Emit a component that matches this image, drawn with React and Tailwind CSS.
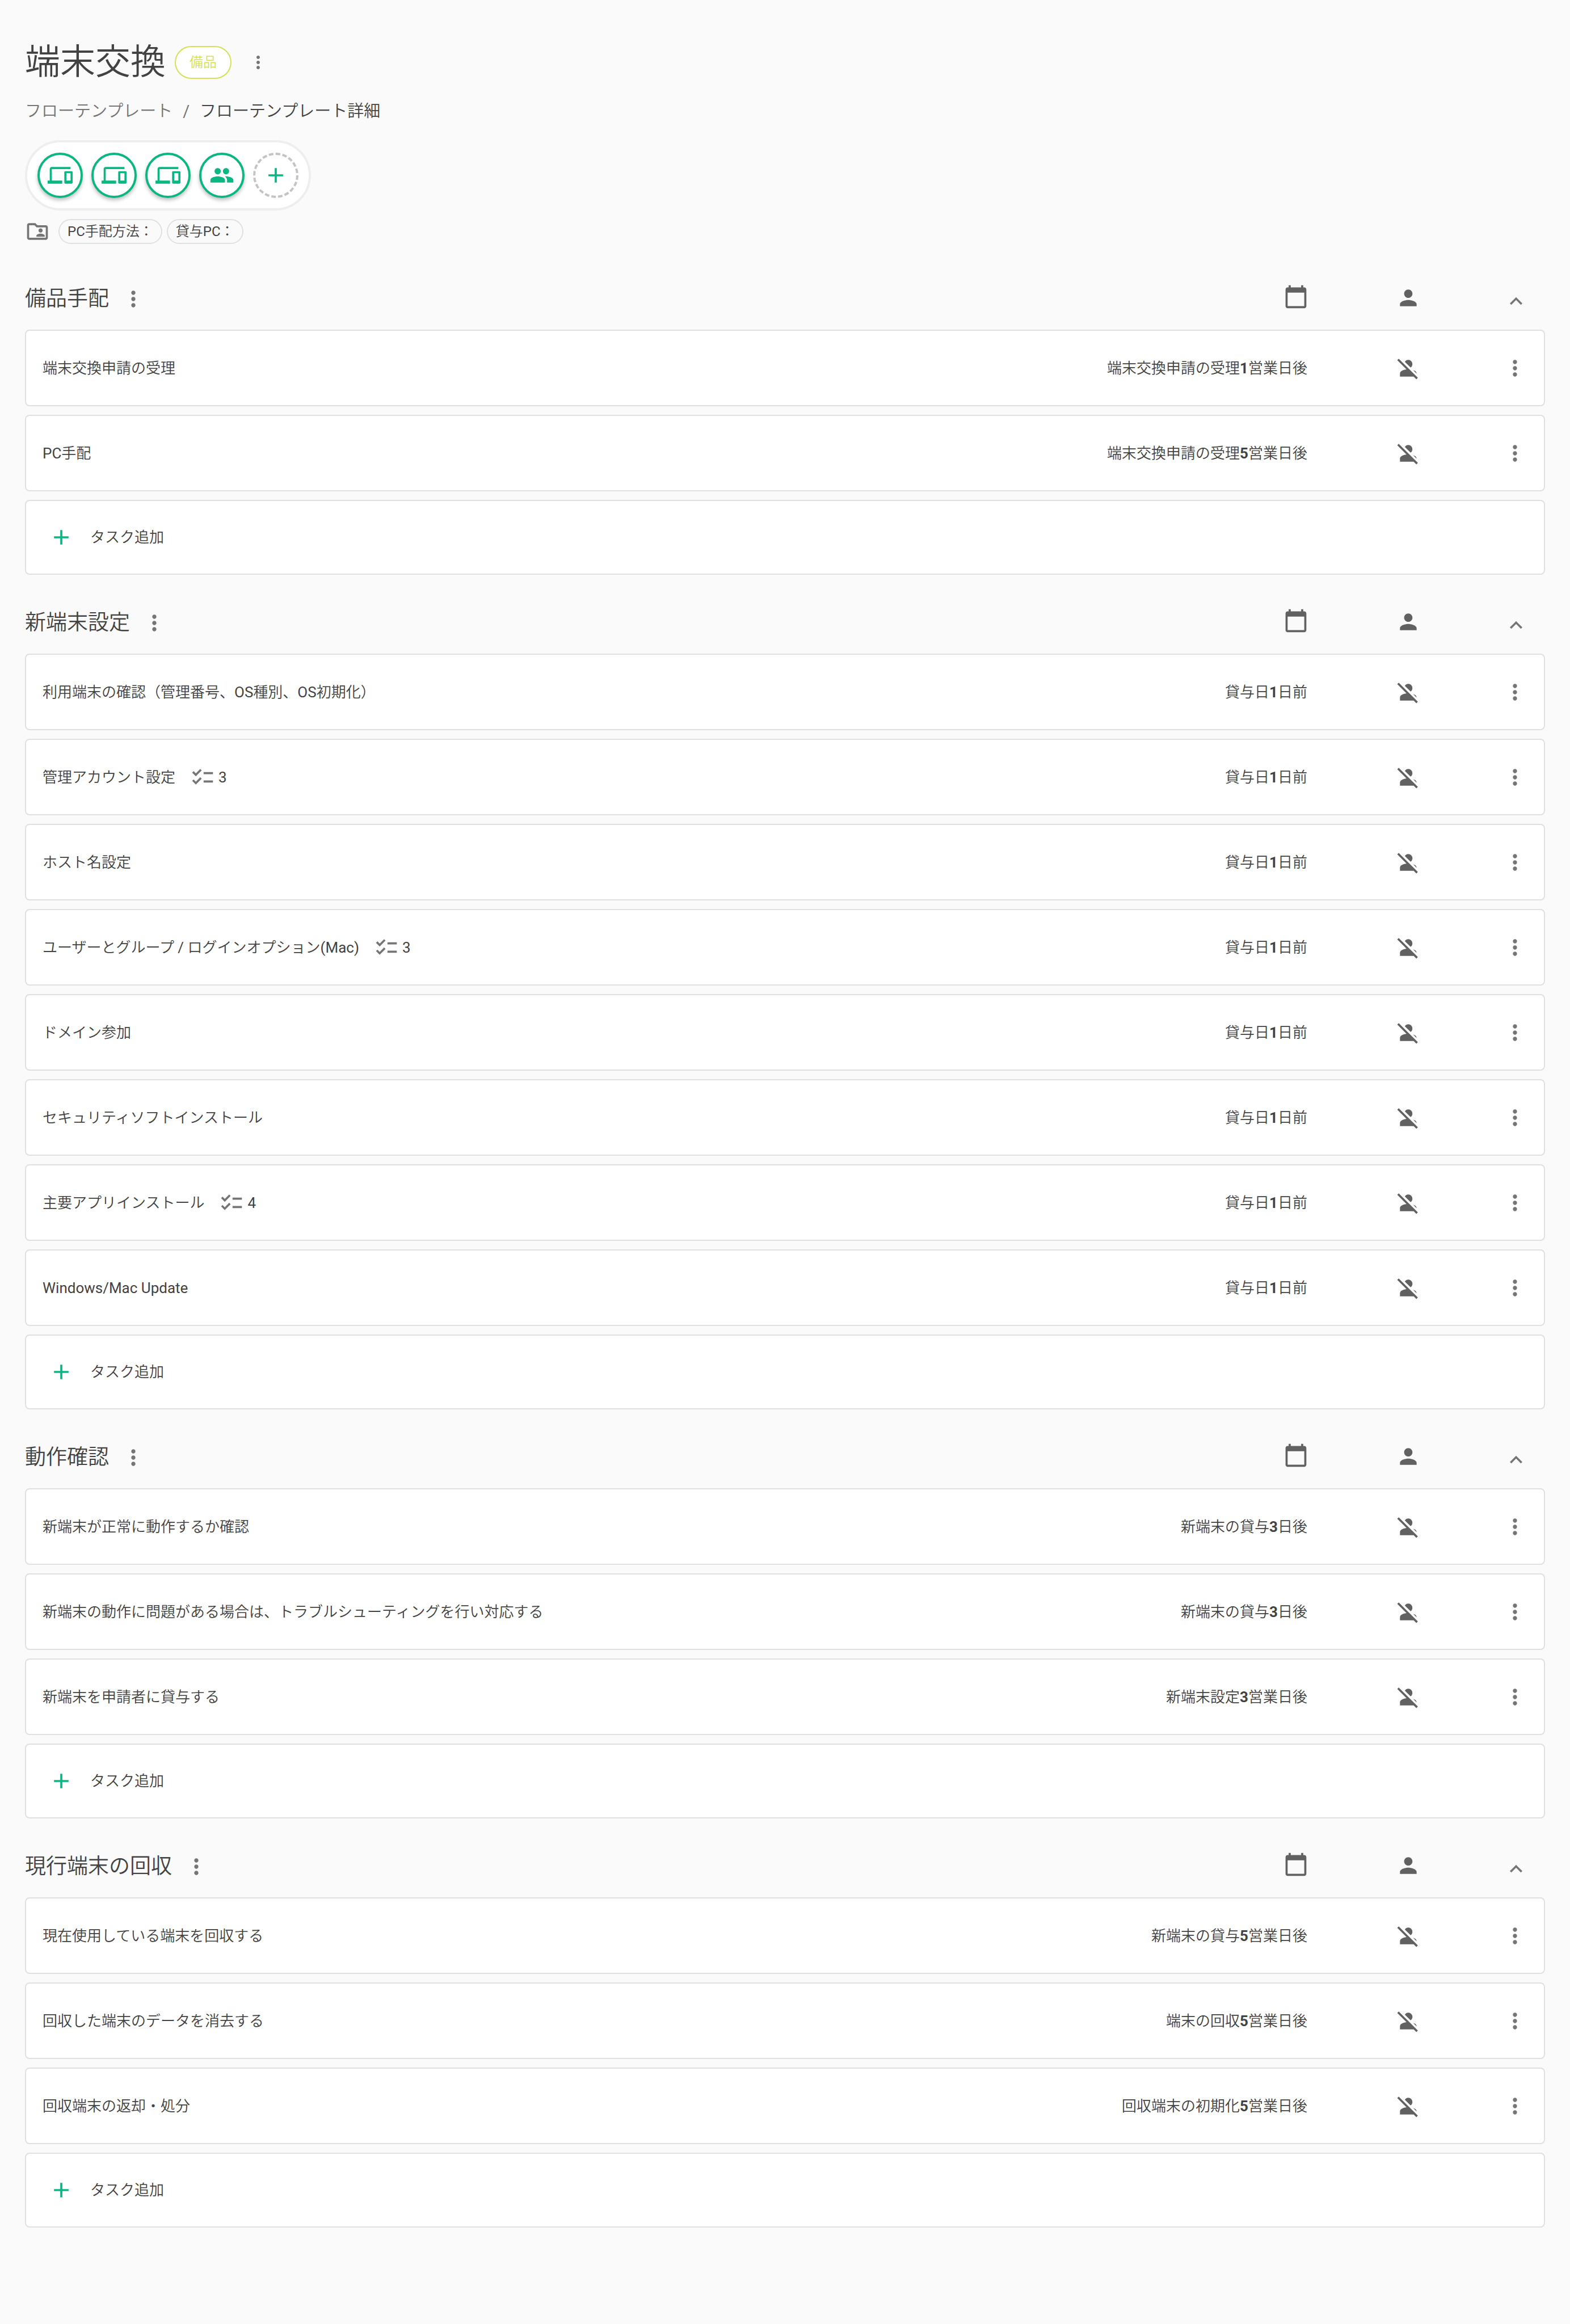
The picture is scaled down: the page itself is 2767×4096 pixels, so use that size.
import { useState } from "react";
import {
  MdAdd,
  MdCalendarToday,
  MdChecklist,
  MdDevices,
  MdExpandLess,
  MdExpandMore,
  MdMoreVert,
  MdOutlineFolderShared,
  MdPeople,
  MdPerson,
  MdPersonOff,
} from "react-icons/md";

const sections = [
  {
    title: "備品手配",
    tasks: [
      { name: "端末交換申請の受理", due: ["端末交換申請の受理", 1, "営業日後"] },
      { name: "PC手配", due: ["端末交換申請の受理", 5, "営業日後"] },
    ],
  },
  {
    title: "新端末設定",
    tasks: [
      { name: "利用端末の確認（管理番号、OS種別、OS初期化）", due: ["貸与日", 1, "日前"] },
      { name: "管理アカウント設定", checks: 3, due: ["貸与日", 1, "日前"] },
      { name: "ホスト名設定", due: ["貸与日", 1, "日前"] },
      { name: "ユーザーとグループ / ログインオプション(Mac)", checks: 3, due: ["貸与日", 1, "日前"] },
      { name: "ドメイン参加", due: ["貸与日", 1, "日前"] },
      { name: "セキュリティソフトインストール", due: ["貸与日", 1, "日前"] },
      { name: "主要アプリインストール", checks: 4, due: ["貸与日", 1, "日前"] },
      { name: "Windows/Mac Update", due: ["貸与日", 1, "日前"] },
    ],
  },
  {
    title: "動作確認",
    tasks: [
      { name: "新端末が正常に動作するか確認", due: ["新端末の貸与", 3, "日後"] },
      { name: "新端末の動作に問題がある場合は、トラブルシューティングを行い対応する", due: ["新端末の貸与", 3, "日後"] },
      { name: "新端末を申請者に貸与する", due: ["新端末設定", 3, "営業日後"] },
    ],
  },
  {
    title: "現行端末の回収",
    tasks: [
      { name: "現在使用している端末を回収する", due: ["新端末の貸与", 5, "営業日後"] },
      { name: "回収した端末のデータを消去する", due: ["端末の回収", 5, "営業日後"] },
      { name: "回収端末の返却・処分", due: ["回収端末の初期化", 5, "営業日後"] },
    ],
  },
];

const members = [MdDevices, MdDevices, MdDevices, MdPeople];

// latin runs keep the regular weight, the kana/kanji around them are demi-light
function Mixed({ text }) {
  return text.split(/([A-Za-z/() ]+)/).map((part, i) =>
    i % 2 ? (
      <span key={i} className="font-normal">{part}</span>
    ) : (
      part
    )
  );
}

function MoreButton({ className = "" }) {
  return (
    <button aria-label="メニュー" className={`flex text-[#757575] ${className}`}>
      <MdMoreVert className="size-11" />
    </button>
  );
}

function TaskRow({ task }) {
  const [target, days, unit] = task.due;

  return (
    <li className="flex h-[135px] items-center rounded-lg border-2 border-[#e0e0e0] bg-white px-[29px]">
      <span>
        <Mixed text={task.name} />
      </span>
      {task.checks && (
        <span className="ml-[26px] flex items-center gap-1.5 font-normal">
          <MdChecklist className="size-11 text-[#757575]" />
          {task.checks}
        </span>
      )}
      <span className="mr-3 ml-auto">
        {target}
        <b className="font-bold">{days}</b>
        {unit}
      </span>
      <span className="flex w-[332px] justify-center text-[#616161]">
        <MdPersonOff className="size-11" />
      </span>
      <MoreButton />
    </li>
  );
}

function Section({ section }) {
  const [open, setOpen] = useState(true);

  return (
    <section className="mb-[30px]">
      <div className="flex h-[109px] items-center pr-[29px]">
        <h2 className="text-[37px] leading-[44px]">{section.title}</h2>
        <MoreButton className="ml-[21px]" />
        <span className="mr-2 ml-auto pb-2 text-[#616161]">
          <MdCalendarToday className="size-11" />
        </span>
        <span className="flex w-[336px] justify-center pb-1 text-[#616161]">
          <MdPerson className="size-11" />
        </span>
        <button aria-label="開閉" className="pt-2 text-[#757575]" onClick={() => setOpen(!open)}>
          {open ? <MdExpandLess className="size-11" /> : <MdExpandMore className="size-11" />}
        </button>
      </div>

      {open && (
        <ul className="flex flex-col gap-[15px]">
          {section.tasks.map((task) => (
            <TaskRow key={task.name} task={task} />
          ))}
          <li>
            <button className="flex h-[132px] w-full items-center gap-[29px] rounded-lg border-2 border-[#e0e0e0] bg-white px-10">
              <MdAdd className="size-11 text-[#0ab682]" />
              タスク追加
            </button>
          </li>
        </ul>
      )}
    </section>
  );
}

function App() {
  return (
    <div className="min-h-screen bg-[#fafafa] px-11 pt-[74px] pb-40 font-[Roboto,'Noto_Sans_CJK_JP',sans-serif] text-[26px] leading-9 font-[350] text-[#424242]">
      <header>
        <div className="flex h-[72px] items-center">
          <h1 className="text-[62px] leading-[72px]">端末交換</h1>
          <span className="ml-4 flex h-[58px] items-center rounded-full border-2 border-[#d4e157] bg-white px-6 text-2xl text-[#d4e157]">
            備品
          </span>
          <button aria-label="メニュー" className="ml-[29px] text-[#757575]">
            <MdMoreVert className="size-9" />
          </button>
        </div>

        <nav className="mt-7 flex gap-[18px] text-[29px] leading-[44px]">
          <a href="#templates" className="text-[#757575]">フローテンプレート</a>
          <span className="font-normal text-[#757575]">/</span>
          <span>フローテンプレート詳細</span>
        </nav>

        <div className="mt-[29px] flex h-[124px] w-fit items-center gap-[15px] rounded-full border-4 border-[#eeeeee] bg-white px-[18px]">
          {members.map((Icon, i) => (
            <button
              key={i}
              aria-label="メンバー"
              className="flex size-20 items-center justify-center rounded-full border-4 border-[#0ab682] bg-white text-[#0ab682] shadow-[0_4px_6px_rgba(0,0,0,0.25)]"
            >
              <Icon className="size-11" />
            </button>
          ))}
          <button
            aria-label="追加"
            className="flex size-20 items-center justify-center rounded-full border-4 border-dashed border-[#c4c4c4] text-[#0ab682]"
          >
            <MdAdd className="size-11" />
          </button>
        </div>

        <div className="mt-[15px] flex items-center text-2xl">
          <MdOutlineFolderShared className="mr-[15px] size-11 text-[#757575]" />
          <span className="mr-2 flex h-11 items-center rounded-full border-2 border-[#e0e0e0] px-3.5">
            <Mixed text="PC手配方法：" />
          </span>
          <span className="flex h-11 items-center rounded-full border-2 border-[#e0e0e0] px-3.5">
            <Mixed text="貸与PC：" />
          </span>
        </div>
      </header>

      <main className="mt-[42px]">
        {sections.map((section) => (
          <Section key={section.title} section={section} />
        ))}
      </main>
    </div>
  );
}

export default App;
